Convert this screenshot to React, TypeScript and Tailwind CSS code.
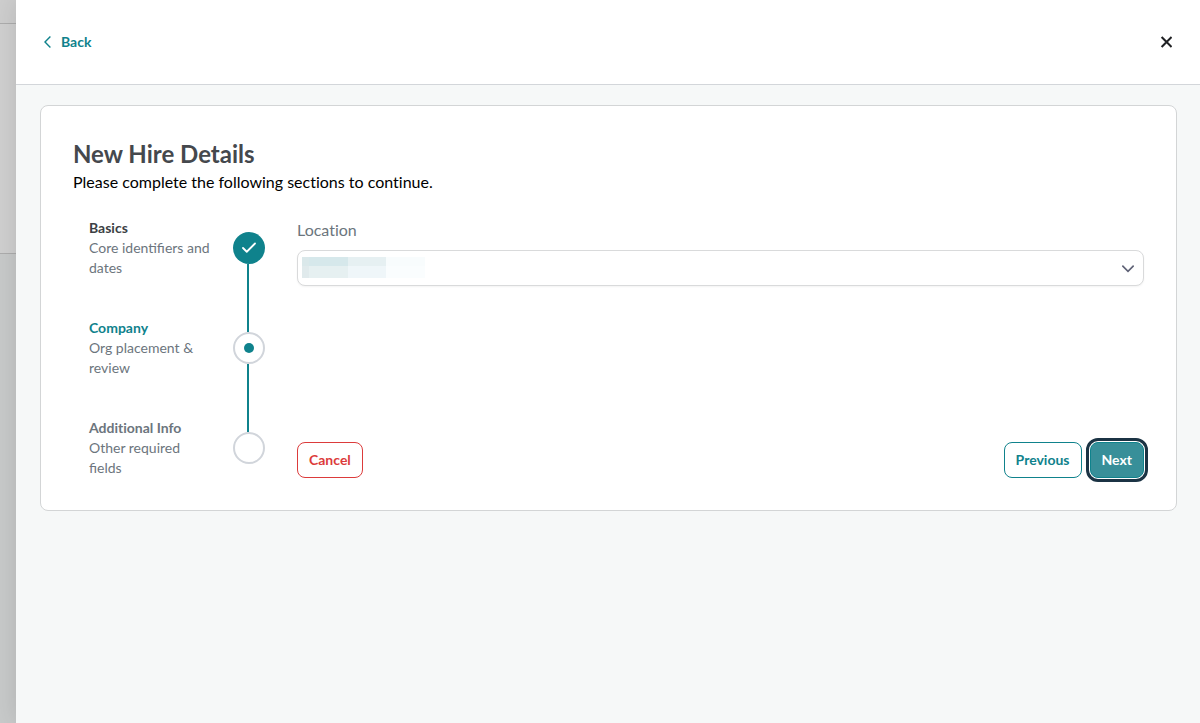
import { Check } from "lucide-react";

type StepState = "done" | "current" | "upcoming";

const steps: { title: string; detail: string; state: StepState }[] = [
  { title: "Basics", detail: "Core identifiers and dates", state: "done" },
  { title: "Company", detail: "Org placement & review", state: "current" },
  { title: "Additional Info", detail: "Other required fields", state: "upcoming" },
];

const titleColor: Record<StepState, string> = {
  done: "text-[#3c3f44]",
  current: "text-[#0f828c]",
  upcoming: "text-[#6c757d]",
};

function StepMarker({ state }: { state: StepState }) {
  if (state === "done") {
    return (
      <span className="flex size-8 items-center justify-center rounded-full bg-[#0f828c] text-white">
        <Check className="size-[18px]" strokeWidth={2.4} aria-hidden />
      </span>
    );
  }
  return (
    <span className="flex size-8 items-center justify-center rounded-full border-2 border-[#d1d5db] bg-white">
      {state === "current" && <span className="size-2.5 rounded-full bg-[#0f828c]" />}
    </span>
  );
}

function Stepper() {
  return (
    <div className="flex w-48 shrink-0 justify-between pl-4">
      <ol className="flex w-31 flex-col gap-10 text-sm leading-5">
        {steps.map((s) => (
          <li key={s.title} aria-current={s.state === "current" ? "step" : undefined}>
            <p className={`font-bold [font-variant-ligatures:none] ${titleColor[s.state]}`}>{s.title}</p>
            <p className="text-[#6c757d]">{s.detail}</p>
          </li>
        ))}
      </ol>
      <div className="flex flex-col pt-3.5" aria-hidden>
        {steps.map((s, i) => (
          <div key={s.title}>
            {i > 0 && <div className="ml-3.5 h-[68px] w-0.5 bg-[#0f828c]" />}
            <StepMarker state={s.state} />
          </div>
        ))}
      </div>
    </div>
  );
}

function LocationField() {
  return (
    <div className="flex flex-col gap-2">
      <label htmlFor="location" className="text-base text-[#6c757d] [font-variant-ligatures:none]">
        Location
      </label>
      <div className="relative">
        <select
          id="location"
          className="block h-9 w-full appearance-none rounded-lg border border-[#d9dadb] bg-white px-3 shadow-xs"
        >
          <option value="" />
        </select>
        {/* redacted value */}
        <div className="pointer-events-none absolute top-[7px] left-[5px] grid grid-cols-[7px_39px_38px_39px] grid-rows-[9px_12px]" aria-hidden>
          <span className="bg-[#dae8ea]" />
          <span className="bg-[#d6e8eb]" />
          <span className="bg-[#e6f0f2]" />
          <span className="bg-[#f8fcfd]" />
          <span className="bg-[#e0eaec]" />
          <span className="bg-[#e6f0f1]" />
          <span className="bg-[#eff6f9]" />
          <span className="bg-[#fafdfe]" />
        </div>
        <svg
          className="pointer-events-none absolute top-3 right-2.5 size-3"
          viewBox="0 0 12 12"
          fill="none"
          stroke="#5f6276"
          strokeWidth="1.7"
          aria-hidden
        >
          <path d="M0.3 3.7 6 9.3 11.7 3.7" />
        </svg>
      </div>
    </div>
  );
}

export default function App() {
  return (
    <div className="flex min-h-screen font-['Lato',sans-serif] text-black">
      <div className="flex w-4 shrink-0 flex-col bg-[#c8caca]" aria-hidden>
        <div className="h-6 border-b border-[#adadad] bg-[#cecece]" />
        <div className="h-[230px] border-b border-[#adadad] bg-[#d0d0d0]" />
      </div>

      <main className="min-w-0 flex-1 bg-[#f6f8f8] shadow-[0_0_24px_rgba(0,0,0,0.12)]">
        <header className="flex h-[85px] items-center justify-between border-b border-[#d3d6da] bg-white px-7">
          <button type="button" className="flex items-center gap-2.5 text-sm font-bold text-[#0f828c]">
            <svg className="h-3 w-[7px]" viewBox="0 0 7 12" fill="none" stroke="currentColor" strokeWidth="1.4" aria-hidden>
              <path d="M6.4 0.6 1 6l5.4 5.4" />
            </svg>
            Back
          </button>
          <button type="button" aria-label="Close" className="text-[#202124]">
            <svg className="size-3" viewBox="0 0 12 12" fill="none" stroke="currentColor" strokeWidth="2.1" aria-hidden>
              <path d="M1.6 1l10 10M11.6 1l-10 10" />
            </svg>
          </button>
        </header>

        <div className="py-5 pr-[23px] pl-6">
          <section className="rounded-lg border border-[#d3d5d6] bg-white p-8">
            <h1 className="text-2xl font-bold text-[#45484d]">New Hire Details</h1>
            <p className="text-base [font-variant-ligatures:none]">Please complete the following sections to continue.</p>

            <div className="mt-6 flex gap-8">
              <Stepper />
              <form className="flex min-w-0 flex-1 flex-col justify-between">
                <LocationField />
                <div className="flex items-center gap-2 text-sm font-bold">
                  <button type="button" className="h-9 rounded-lg border border-[#dc3b3b] bg-white px-[11px] text-[#dc3b3b]">
                    Cancel
                  </button>
                  <button type="button" className="ml-auto h-9 rounded-lg border border-[#0f828c] bg-white px-[11px] text-[#0f828c]">
                    Previous
                  </button>
                  <button
                    type="button"
                    className="h-9 rounded-lg border border-[#0f828c] bg-[#388f99] px-[11px] text-white outline-3 outline-offset-1 outline-[#1b3344]"
                  >
                    Next
                  </button>
                </div>
              </form>
            </div>
          </section>
        </div>
      </main>
    </div>
  );
}
